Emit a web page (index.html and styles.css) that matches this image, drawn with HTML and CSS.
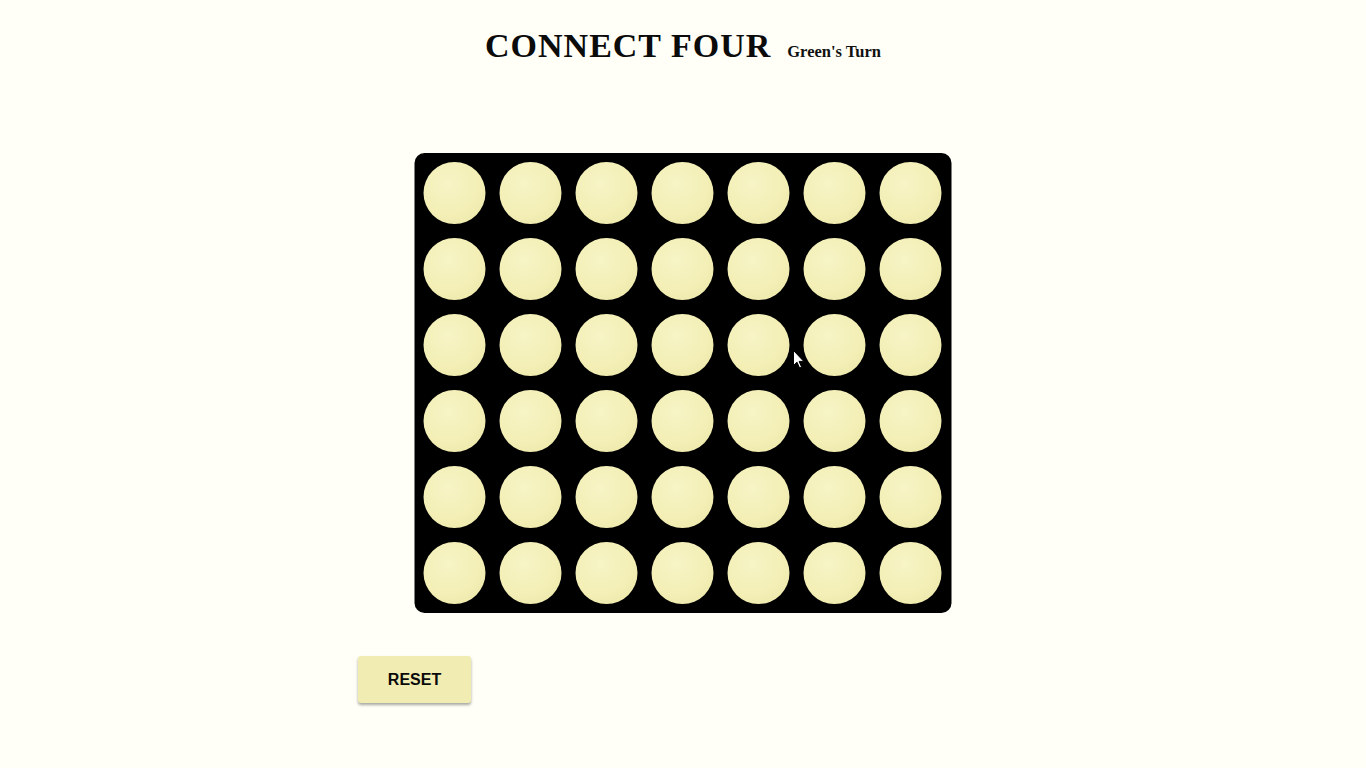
FILE: index.html
```html
<!DOCTYPE html>
<html lang="en">
<head>
<meta charset="utf-8">
<title>Connect Four</title>
<link rel="stylesheet" href="styles.css">
</head>
<body>
<main class="game">
  <header class="header">
    <h1 class="title">CONNECT FOUR</h1>
    <span class="turn">Green's Turn</span>
  </header>
  <section class="board">
    <div class="cell"></div><div class="cell"></div><div class="cell"></div><div class="cell"></div><div class="cell"></div><div class="cell"></div><div class="cell"></div>
    <div class="cell"></div><div class="cell"></div><div class="cell"></div><div class="cell"></div><div class="cell"></div><div class="cell"></div><div class="cell"></div>
    <div class="cell"></div><div class="cell"></div><div class="cell"></div><div class="cell"></div><div class="cell"></div><div class="cell"></div><div class="cell"></div>
    <div class="cell"></div><div class="cell"></div><div class="cell"></div><div class="cell"></div><div class="cell"></div><div class="cell"></div><div class="cell"></div>
    <div class="cell"></div><div class="cell"></div><div class="cell"></div><div class="cell"></div><div class="cell"></div><div class="cell"></div><div class="cell"></div>
    <div class="cell"></div><div class="cell"></div><div class="cell"></div><div class="cell"></div><div class="cell"></div><div class="cell"></div><div class="cell"></div>
  </section>
  <button class="reset">RESET</button>
</main>
<svg class="cursor" width="12" height="19" viewBox="0 0 12 19" aria-hidden="true">
  <path d="M0.5 0.5 L0.5 15.5 L4 12.2 L6.6 18 L8.6 17.1 L6.1 11.4 L10.8 11.4 Z" fill="#fff" stroke="#000" stroke-width="1" stroke-linejoin="round"/>
</svg>
</body>
</html>
```

FILE: styles.css
```css
html, body {
  margin: 0;
  padding: 0;
}

body {
  background: #fffff7;
  min-height: 768px;
  position: relative;
  font-family: "Liberation Serif", "Times New Roman", serif;
}

.game {
  width: 650px;
  margin: 0 auto;
  display: flex;
  flex-direction: column;
  align-items: center;
}

.header {
  display: flex;
  align-items: baseline;
  justify-content: center;
  gap: 16px;
  padding-top: 26px;
  height: 40px;
}

.title {
  margin: 0;
  font-size: 34px;
  line-height: 40px;
  font-weight: bold;
  letter-spacing: 1px;
  color: #0b0b0b;
}

.turn {
  font-size: 16.5px;
  font-weight: bold;
  color: #111;
}

.board {
  margin-top: 87px;
  background: #000;
  border-radius: 10px;
  padding: 9px;
  width: 519px;
  display: grid;
  grid-template-columns: repeat(7, 62px);
  grid-auto-rows: 62px;
  column-gap: 14.17px;
  row-gap: 14px;
  transform: translateX(-0.5px);
}

.cell {
  border-radius: 50%;
  background: radial-gradient(circle at 40% 35%, #f7f4c6 0%, #f3efb6 55%, #ebe6a6 100%);
}

.reset {
  align-self: flex-start;
  margin-top: 43px;
  width: 113px;
  height: 47px;
  border: none;
  border-radius: 3px;
  background: #f0ecb2;
  box-shadow: 0 2px 3px rgba(0, 0, 0, 0.35);
  font-family: "Liberation Sans", Arial, sans-serif;
  font-weight: bold;
  font-size: 16px;
  color: #0a0a0a;
  padding: 0;
  cursor: pointer;
}

.cursor {
  position: absolute;
  left: 793px;
  top: 350px;
}
```
